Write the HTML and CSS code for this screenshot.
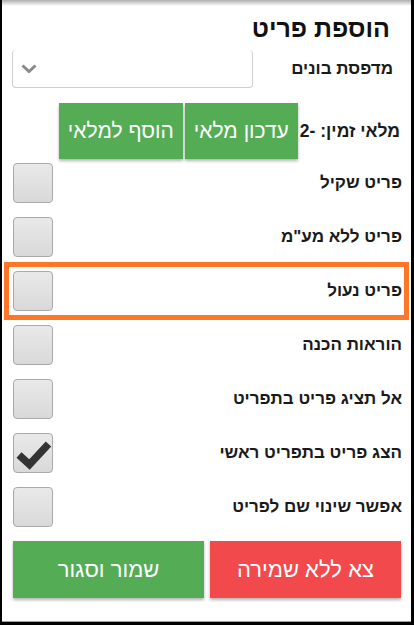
FILE: index.html
```html
<!DOCTYPE html>
<html lang="he" dir="rtl">
<head>
<meta charset="utf-8">
<title>הוספת פריט</title>
<link rel="stylesheet" href="styles.css">
</head>
<body>
<div class="dialog">
  <h1 class="title">הוספת פריט</h1>

  <div class="field-row">
    <span class="label">מדפסת בונים</span>
    <div class="select-box">
      <svg class="chevron" width="16" height="9" viewBox="0 0 16 9"><polyline points="1.5,1.5 8,7.5 14.5,1.5" fill="none" stroke="#8a8a8a" stroke-width="3"/></svg>
    </div>
  </div>

  <div class="stock-row">
    <span class="label stock-label">מלאי זמין: -2</span>
    <div class="stock-actions">
      <button class="btn btn-green btn-small">עדכון מלאי</button>
      <button class="btn btn-green btn-small">הוסף למלאי</button>
    </div>
  </div>

  <ul class="check-list">
    <li class="check-row"><span class="check-label">פריט שקיל</span><span class="checkbox"></span></li>
    <li class="check-row"><span class="check-label">פריט ללא מע"מ</span><span class="checkbox"></span></li>
    <li class="check-row highlighted"><span class="check-label">פריט נעול</span><span class="checkbox"></span></li>
    <li class="check-row"><span class="check-label">הוראות הכנה</span><span class="checkbox"></span></li>
    <li class="check-row"><span class="check-label">אל תציג פריט בתפריט</span><span class="checkbox"></span></li>
    <li class="check-row"><span class="check-label">הצג פריט בתפריט ראשי</span><span class="checkbox checked"><svg width="40" height="40" viewBox="0 0 40 40"><polyline points="6,22 16.5,31.5 35.5,11" fill="none" stroke="#333" stroke-width="7.5"/></svg></span></li>
    <li class="check-row"><span class="check-label">אפשר שינוי שם לפריט</span><span class="checkbox"></span></li>
  </ul>

  <div class="footer">
    <button class="btn btn-red btn-large">צא ללא שמירה</button>
    <button class="btn btn-green btn-large">שמור וסגור</button>
  </div>
</div>
</body>
</html>
```
FILE: styles.css
```css
html, body {
  margin: 0;
  padding: 0;
}
body {
  width: 414px;
  height: 625px;
  box-sizing: border-box;
  border-left: 2px solid #000;
  border-right: 3px solid #000;
  border-bottom: 3px solid #000;
  background: #fff;
  overflow: hidden;
  font-family: "Liberation Sans", Arial, sans-serif;
  color: #1a1a1a;
}
.dialog {
  height: 100%;
  box-sizing: border-box;
  border-bottom: 1px solid #a0a0a0;
  background: linear-gradient(rgba(0,0,0,0.32), rgba(0,0,0,0) 6px) no-repeat, #fff;
  direction: rtl;
}
.title {
  margin: 0;
  padding: 13px 21px 0 0;
  font-size: 25px;
  line-height: 30px;
  font-weight: bold;
  color: #111;
}
.label {
  font-size: 17px;
  font-weight: bold;
  white-space: nowrap;
}
.stock-label {
  font-size: 17.5px;
}
.field-row {
  display: flex;
  align-items: center;
  margin-top: 7px;
  height: 38px;
  padding: 0 18px 0 10px;
}
.select-box {
  margin-right: auto;
  width: 241px;
  height: 38px;
  box-sizing: border-box;
  border: 1px solid #cfcfcf;
  border-top: none;
  border-radius: 4px;
  display: flex;
  align-items: center;
  justify-content: flex-end;
  padding-left: 8px;
}
.chevron {
  display: block;
}
.stock-row {
  display: flex;
  align-items: center;
  margin-top: 15px;
  height: 56px;
  padding-right: 11px;
  gap: 2px;
}
.stock-actions {
  display: flex;
  gap: 2px;
  height: 56px;
}
.btn {
  border: none;
  margin: 0;
  color: #fff;
  font-family: "Liberation Sans", Arial, sans-serif;
  font-weight: normal;
  box-shadow: 0 2px 3px rgba(0,0,0,0.3);
  cursor: pointer;
}
.btn-green {
  background: #54ad54;
}
.btn-red {
  background: #f2494d;
}
.btn-small {
  height: 56px;
  padding: 0 9px;
  font-size: 21px;
}
.check-list {
  list-style: none;
  margin: 0;
  padding: 0 7px;
  display: flex;
  flex-direction: column;
  gap: 6px;
}
.check-row {
  display: flex;
  align-items: center;
  justify-content: space-between;
  padding: 4px 2px 4px 4px;
}
.check-row.highlighted {
  outline: 5px solid #ff7628;
}
.check-label {
  font-size: 17px;
  font-weight: bold;
}
.checkbox {
  width: 40px;
  height: 40px;
  box-sizing: border-box;
  border: 1px solid #a9a9a9;
  border-radius: 4px;
  background: linear-gradient(#e9e9e9, #d9d9d9);
  position: relative;
}
.checkbox svg {
  position: absolute;
  left: -1px;
  top: -1px;
}
.footer {
  display: flex;
  gap: 6px;
  margin-top: 10px;
  padding: 0 10px 0 11px;
}
.btn-large {
  flex: 1;
  height: 57px;
  font-size: 22px;
}
```
